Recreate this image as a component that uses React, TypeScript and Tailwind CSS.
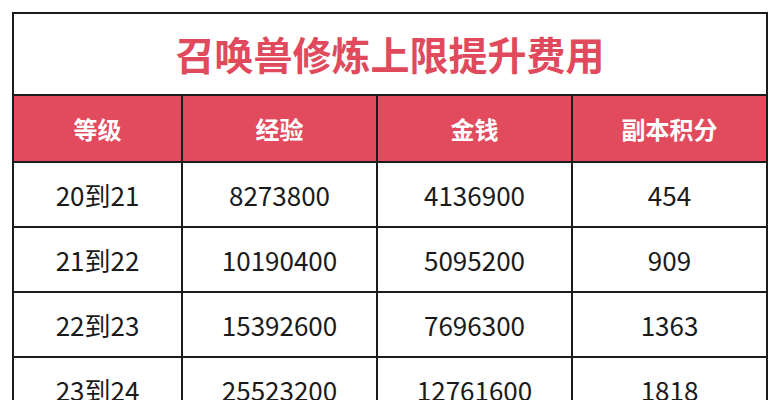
const headers = ["等级", "经验", "金钱", "副本积分"];

const rows = [
  ["20到21", "8273800", "4136900", "454"],
  ["21到22", "10190400", "5095200", "909"],
  ["22到23", "15392600", "7696300", "1363"],
  ["23到24", "25523200", "12761600", "1818"],
];

const font = { fontFamily: '"Noto Sans CJK SC", "Noto Sans", sans-serif' };

export default function App() {
  return (
    <div className="h-[400px] w-[778px] overflow-hidden bg-white pl-[12px] pt-[12px]" style={font}>
      <table className="w-[754px] table-fixed border-collapse">
        <colgroup>
          <col className="w-[169px]" />
          <col className="w-[195px]" />
          <col className="w-[195px]" />
          <col className="w-[195px]" />
        </colgroup>
        <thead>
          <tr className="h-[82px]">
            <th
              colSpan={4}
              className="border-2 border-[#1c1c1c] pb-[2px] text-center text-[39px] font-bold leading-none text-[#e04a5c]"
            >
              召唤兽修炼上限提升费用
            </th>
          </tr>
          <tr className="h-[67px] bg-[#e24b5d]">
            {headers.map((h) => (
              <th key={h} className="border-2 border-[#1c1c1c] text-center text-[24px] font-bold text-white">
                {h}
              </th>
            ))}
          </tr>
        </thead>
        <tbody>
          {rows.map((r) => (
            <tr key={r[0]} className="h-[65px]">
              {r.map((c, i) => (
                <td key={i} className="border-2 border-[#1c1c1c] text-center text-[26px] text-[#1a1a1a]">
                  {c}
                </td>
              ))}
            </tr>
          ))}
        </tbody>
      </table>
    </div>
  );
}
